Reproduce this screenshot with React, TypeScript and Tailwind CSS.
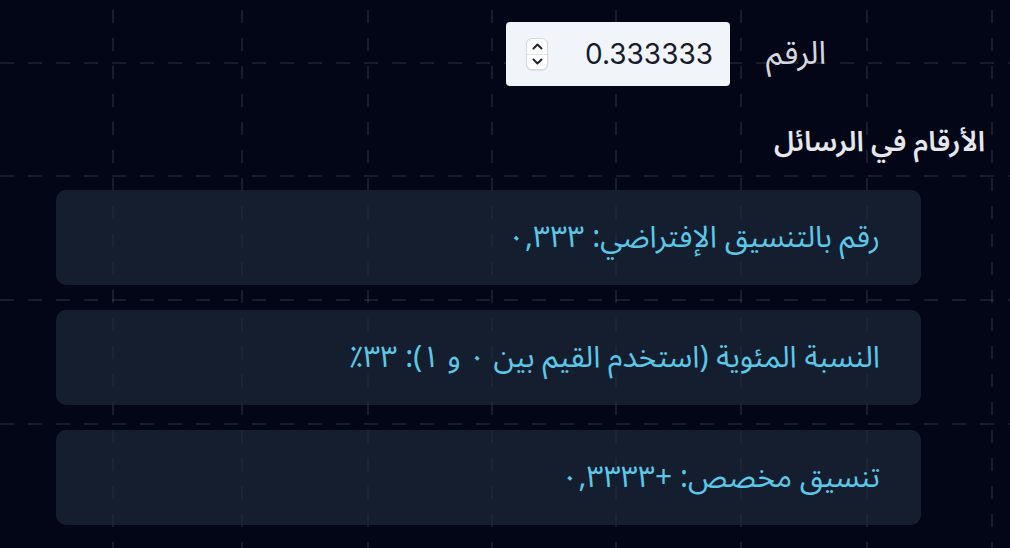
import React from "react";

const VX = [113, 242, 368, 492, 616, 741, 867, 992];
const HY = [63, 176, 300, 424];

function Grid() {
  return (
    <svg className="absolute inset-0 pointer-events-none" width="1010" height="548" viewBox="0 0 1010 548">
      {VX.map((x) => (
        <line key={"v" + x} x1={x} y1={10} x2={x} y2={548} stroke="rgba(255,255,255,0.09)" strokeWidth="2" strokeDasharray="13 15" />
      ))}
      {HY.map((y) => (
        <line key={"h" + y} x1={0} y1={y} x2={1010} y2={y} stroke="rgba(255,255,255,0.09)" strokeWidth="2" strokeDasharray="14 14" />
      ))}
    </svg>
  );
}

function Spinner() {
  return (
    <div className="flex h-[32px] w-[22px] flex-col overflow-hidden rounded-[6px] border border-[#d4d8de] bg-white shadow-[0_1px_1px_rgba(0,0,0,0.08)]">
      <div className="flex flex-1 items-center justify-center border-b border-[#dfe2e6]">
        <svg width="11" height="7" viewBox="0 0 11 7" fill="none">
          <path d="M1.5 5.5 L5.5 1.5 L9.5 5.5" stroke="#1f2430" strokeWidth="2" strokeLinecap="round" strokeLinejoin="round" />
        </svg>
      </div>
      <div className="flex flex-1 items-center justify-center">
        <svg width="11" height="7" viewBox="0 0 11 7" fill="none">
          <path d="M1.5 1.5 L5.5 5.5 L9.5 1.5" stroke="#1f2430" strokeWidth="2" strokeLinecap="round" strokeLinejoin="round" />
        </svg>
      </div>
    </div>
  );
}

const cards = [
  "رقم بالتنسيق الإفتراضي: ٠,٣٣٣",
  "النسبة المئوية (استخدم القيم بين ٠ و ١): ٣٣٪",
  "تنسيق مخصص: +٠,٣٣٣٣",
];

const AR = '"Noto Sans Arabic", "Noto Naskh Arabic", "Noto Kufi Arabic", "DejaVu Sans", sans-serif';

export default function App() {
  return (
    <div
      dir="rtl"
      className="relative h-[548px] w-[1010px] overflow-hidden bg-[#020617]"
      style={{ fontFamily: AR }}
    >
      <Grid />
      <div className="relative flex flex-col">
        <div className="mt-[22px] flex items-center gap-[36px] pr-[184px]">
          <label className="text-[32px] leading-[40px] text-[#d4d7dd]">الرقم</label>
          <div className="flex h-[64px] w-[224px] items-center justify-between rounded-[4px] bg-[#f1f4f9] pl-[20px] pr-[17px]" dir="ltr">
            <Spinner />
            <span className="text-[28px] leading-none text-[#161b2e]" style={{ fontFamily: '"Inter", sans-serif' }}>
              0.333333
            </span>
          </div>
        </div>
        <h2 className="mt-[39px] pr-[25px] text-[28px] font-semibold leading-[36px] text-[#e5e7eb]">
          الأرقام في الرسائل
        </h2>
        <div className="mt-[29px] ml-[56px] mr-[89px] flex flex-col gap-[25px]">
          {cards.map((t) => (
            <div key={t} className="flex h-[95px] items-center rounded-[10px] bg-[#1e293b]/70 pr-[41px]">
              <span className="text-[30px] leading-[40px] text-[#5cc8e8]">{t}</span>
            </div>
          ))}
        </div>
      </div>
    </div>
  );
}
